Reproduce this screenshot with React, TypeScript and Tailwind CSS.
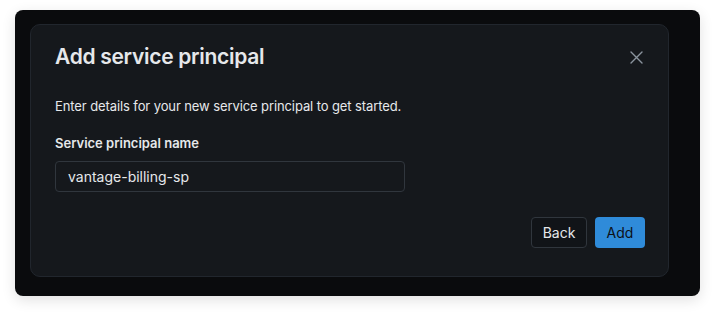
export default function App() {
  return (
    <div className="min-h-screen bg-white pl-[15px] pt-[10px] font-['Inter','Liberation_Sans',sans-serif]">
      <div className="w-[685px] h-[286px] rounded-lg bg-[#0a0b0d] pt-[14px] pl-[15px] shadow-[0_4px_14px_rgba(0,0,0,0.12)]">
        <div className="w-[639px] h-[253px] rounded-[10px] border border-[#21262d] bg-[#15181c] pl-[24px] pr-[25px] pt-[18px]">
          {/* header */}
          <div className="flex items-center justify-between">
            <h1 className="text-[21px] leading-[28px] font-semibold tracking-[-0.3px] text-[#e6e8eb]">
              Add service principal
            </h1>
            <button className="text-[#8b949e]">
              <svg width="13" height="13" viewBox="0 0 13 13" fill="none" stroke="currentColor" strokeWidth="1.4" strokeLinecap="round">
                <path d="M1 1L12 12M12 1L1 12" />
              </svg>
            </button>
          </div>

          <p className="mt-[25px] text-[13px] leading-[20px] tracking-[-0.1px] text-[#e6e8eb]">
            Enter details for your new service principal to get started.
          </p>

          <label className="block mt-[17px] text-[13px] leading-[20px] font-semibold text-[#e6e8eb]">
            Service principal name
          </label>
          <div className="mt-[8px] w-[350px] h-[31px] rounded-[4px] border border-[#30363d] bg-[#15181c] px-[12px] flex items-center text-[14px] text-[#e6e8eb]">
            vantage-billing-sp
          </div>

          <div className="mt-[25px] mr-[-2px] flex justify-end gap-[8px]">
            <button className="w-[56px] h-[31px] rounded-[4px] border border-[#30363d] bg-[#111418] text-[14px] text-[#e6e8eb]">
              Back
            </button>
            <button className="w-[50px] h-[31px] rounded-[4px] bg-[#2f8bd9] text-[14px] text-[#0d1117]">
              Add
            </button>
          </div>
        </div>
      </div>
    </div>
  );
}
